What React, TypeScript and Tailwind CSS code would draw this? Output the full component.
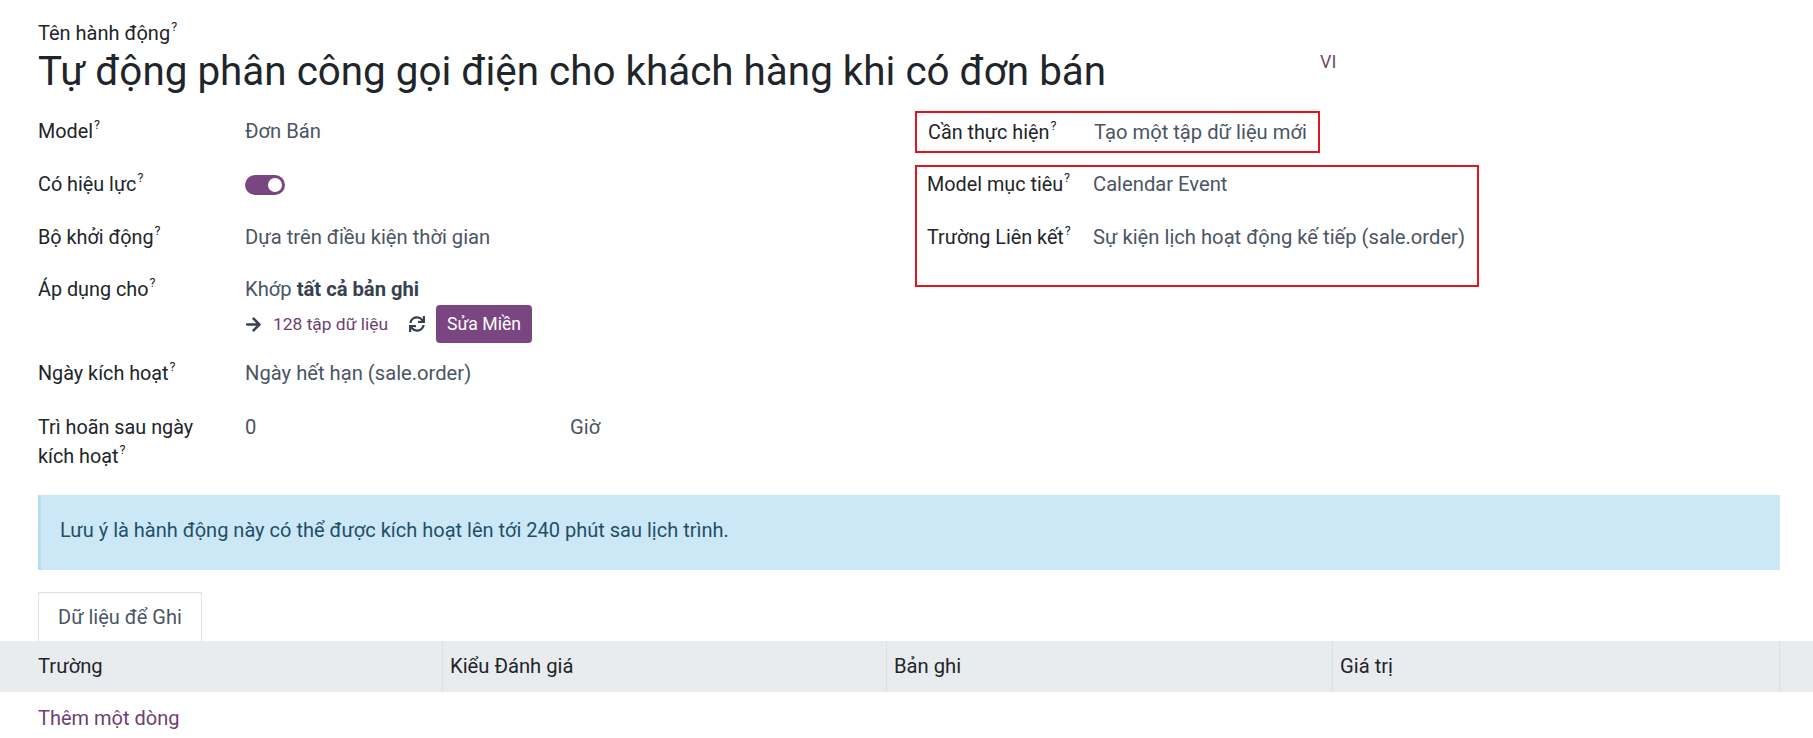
import { FaArrowRight, FaSync } from 'react-icons/fa'

function Help() {
  return <span className="relative -top-[9px] ml-[1px] text-[12.5px] leading-none text-[#212529]">?</span>
}

function Row({ label, children, className = '' }: { label: React.ReactNode; children?: React.ReactNode; className?: string }) {
  return (
    <div className={`flex ${className}`}>
      <div className="w-[207px] shrink-0 text-[19.8px] text-[#212529]">{label}</div>
      <div className="text-[20.2px] text-[#4b5563]">{children}</div>
    </div>
  )
}

export default function App() {
  return (
    <div className="min-h-screen bg-white font-['Roboto',sans-serif] text-[20px] leading-[29px] overflow-hidden">
      <div className="pl-[38px] pr-[33px] pt-[19px]">
        {/* tiêu đề */}
        <div className="text-[20px] text-[#212529]">
          Tên hành động
          <Help />
        </div>
        <div className="flex items-start">
          <h1 className="w-[1282px] text-[40.4px] leading-[48px] text-[#212529]">
            Tự động phân công gọi điện cho khách hàng khi có đơn bán
          </h1>
          <span className="-mt-[1px] text-[18px] text-[#714b67]">VI</span>
        </div>

        {/* nhóm trường */}
        <div className="mt-[15px] flex">
          <div className="w-[877px] shrink-0 pt-[6px]">
            <Row label={<>Model<Help /></>} className="pb-[24px]">
              Đơn Bán
            </Row>
            <Row label={<>Có hiệu lực<Help /></>} className="pb-[24px]">
              <div className="flex h-[29px] items-center">
                <div className="flex h-[20px] w-[40px] items-center justify-end rounded-full bg-[#7a4681] px-[3px]">
                  <div className="h-[14px] w-[14px] rounded-full bg-white" />
                </div>
              </div>
            </Row>
            <Row label={<>Bộ khởi động<Help /></>} className="pb-[23px]">
              Dựa trên điều kiện thời gian
            </Row>
            <Row label={<>Áp dụng cho<Help /></>} className="pb-[16px]">
              <div>
                Khớp <b className="font-bold text-[#374151]">tất cả bản ghi</b>
              </div>
              <div className="mt-[1px] flex h-[38px] items-center">
                <FaArrowRight className="text-[17px] text-[#374151]" />
                <span className="ml-[11px] text-[17.4px] text-[#6f3f73]">128 tập dữ liệu</span>
                <FaSync className="ml-[21px] text-[16px] text-[#374151]" />
                <button className="ml-[11px] h-[38px] rounded-[4px] bg-[#7a4681] px-[11px] text-[17.6px] text-white">
                  Sửa Miền
                </button>
              </div>
            </Row>
            <Row label={<>Ngày kích hoạt<Help /></>} className="pb-[25px]">
              Ngày hết hạn (sale.order)
            </Row>
            <Row
              label={
                <>
                  Trì hoãn sau ngày
                  <br />
                  kích hoạt
                  <Help />
                </>
              }
            >
              <div className="flex">
                <span className="w-[325px]">0</span>
                <span>Giờ</span>
              </div>
            </Row>
          </div>

          <div className="flex flex-col items-start">
            <div className="flex h-[42px] w-[405px] items-center border-2 border-[#e3141b] px-[11px]">
              <div className="w-[166px] shrink-0 text-[19.8px] text-[#212529]">
                Cần thực hiện
                <Help />
              </div>
              <div className="text-[20.2px] text-[#4b5563]">Tạo một tập dữ liệu mới</div>
            </div>
            <div className="mt-[12px] h-[122px] w-[564px] border-2 border-[#e3141b] px-[10px] pt-[3px]">
              <div className="flex">
                <div className="w-[166px] shrink-0 text-[19.8px] text-[#212529]">
                  Model mục tiêu
                  <Help />
                </div>
                <div className="text-[20.2px] text-[#4b5563]">Calendar Event</div>
              </div>
              <div className="mt-[24px] flex">
                <div className="w-[166px] shrink-0 text-[19.8px] text-[#212529]">
                  Trường Liên kết
                  <Help />
                </div>
                <div className="text-[20.2px] text-[#4b5563]">Sự kiện lịch hoạt động kế tiếp (sale.order)</div>
              </div>
            </div>
          </div>
        </div>

        {/* thông báo */}
        <div className="mt-[24px] flex h-[75px] items-center border-l-[3px] border-[#b9dcee] bg-[#cce8f7] pb-[4px] pl-[19px] text-[20px] text-[#1f4f68]">
          Lưu ý là hành động này có thể được kích hoạt lên tới 240 phút sau lịch trình.
        </div>

        {/* tab */}
        <div className="mt-[22px] flex">
          <div className="flex h-[49px] w-[164px] items-center border border-b-0 border-[#dee2e6] pl-[19px] text-[20px] text-[#4b5563]">
            Dữ liệu để Ghi
          </div>
        </div>

        <div className="-ml-[38px] -mr-[33px]">
          <div className="flex h-[51px] items-center bg-[#e9ecef] text-[20.2px] text-[#212529]">
            <div className="flex h-full w-[443px] items-center border-r border-[#dde1e5] pl-[38px]">Trường</div>
            <div className="flex h-full w-[444px] items-center border-r border-[#dde1e5] pl-[7px]">Kiểu Đánh giá</div>
            <div className="flex h-full w-[446px] items-center border-r border-[#dde1e5] pl-[7px]">Bản ghi</div>
            <div className="flex h-full w-[447px] items-center border-r border-[#dde1e5] pl-[7px]">Giá trị</div>
            <div className="h-full flex-1" />
          </div>
          <div className="pl-[38px] pt-[12px] text-[20px] text-[#6f3f73]">Thêm một dòng</div>
        </div>
      </div>
    </div>
  )
}
